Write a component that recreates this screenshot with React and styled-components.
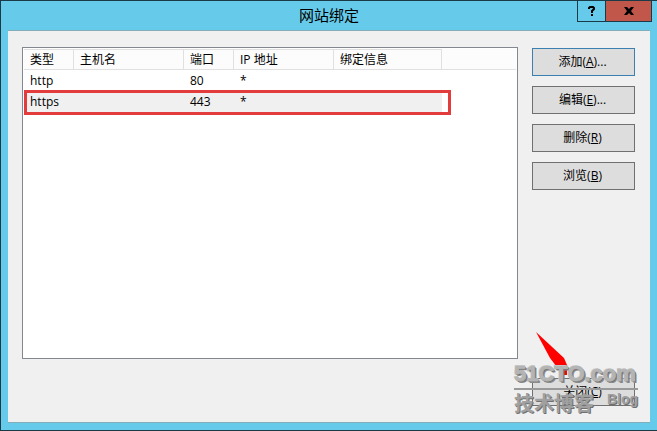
import React, { useState } from 'react';
import styled, { createGlobalStyle } from 'styled-components';

const GlobalStyle = createGlobalStyle`
  * {
    box-sizing: border-box;
  }

  body {
    margin: 0;
    font-family: 'Open Sans', 'Noto Sans CJK SC', sans-serif;
    font-size: 12px;
    color: #000;
  }
`;

const Dialog = styled.div`
  display: flex;
  flex-direction: column;
  min-height: 100vh;
  padding: 0 7px 7px;
  border: 1px solid #1b3a48;
  border-right: none;
  background-color: #66cbea;
`;

const TitleBar = styled.header`
  display: grid;
  grid-template-columns: 1fr auto 1fr;
  align-items: start;
  height: 29px;
`;

const Title = styled.h1`
  grid-column: 2;
  margin: 0;
  font-size: 15px;
  font-weight: normal;
  line-height: 28px;
`;

const WindowButtons = styled.div`
  display: flex;
  justify-content: flex-end;
  margin-right: -2px;
`;

const WindowButton = styled.button`
  display: flex;
  align-items: center;
  justify-content: center;
  width: ${props => (props.$close ? '47px' : '29px')};
  height: 21px;
  padding: 0;
  border: 1px solid #1b3a48;
  border-top: none;
  margin-left: ${props => (props.$close ? '-1px' : '0')};
  background-color: ${props => (props.$close ? '#c1564b' : '#66cbea')};
`;

const Client = styled.main`
  display: flex;
  flex: 1;
  gap: 14px;
  padding: 16px 15px 16px 14px;
  border-top: 1px solid #84adba;
  border-bottom: 1px solid #84adba;
  background-color: #f0f0f0;
`;

const ListBox = styled.div`
  flex: 1;
  margin-bottom: 47px;
  padding: 1px;
  border: 1px solid #828790;
  background-color: #fff;
`;

const Table = styled.table`
  width: 100%;
  border-collapse: separate;
  border-spacing: 0;
  table-layout: fixed;
`;

const HeadCell = styled.th`
  width: ${props => props.$width};
  height: 21px;
  padding: 0 0 0 6px;
  border: 1px solid #e0e0e0;
  border-left: none;
  border-right-width: ${props => (props.$filler ? '0' : '1px')};
  border-top-color: ${props => (props.$filler ? '#fcfcfc' : '#e0e0e0')};
  background-color: #fcfcfc;
  font-weight: normal;
  line-height: 18px;
  text-align: left;
`;

const Row = styled.tr`
  cursor: default;
`;

const Cell = styled.td`
  height: 21px;
  padding: 1px 0 0 6px;
  background-color: ${props => (props.$selected ? '#f0f0f0' : '#fff')};
  line-height: 20px;
  vertical-align: top;
`;

const Highlighted = styled.div`
  position: relative;
`;

const Marker = styled.div`
  position: absolute;
  top: 41px;
  left: 0;
  width: 427px;
  height: 25px;
  border: 3px solid #e23c3c;
  pointer-events: none;
`;

const Actions = styled.div`
  display: flex;
  flex-direction: column;
  gap: 10px;
  width: 103px;
  padding-top: 1px;
`;

const ActionButton = styled.button`
  height: 28px;
  padding: 0 2px 0 0;
  border: 1px solid ${props => (props.$primary ? '#3c7fb1' : '#707070')};
  background-color: #ddd;
  color: #000;
  font-family: inherit;
  font-size: 12px;
  line-height: 18px;
`;

const Footer = styled.div`
  position: relative;
  display: flex;
  flex-direction: column;
  margin-top: auto;
`;

const Arrow = styled.svg`
  position: absolute;
  top: -46px;
  left: 4px;
`;

const Watermark = styled.div`
  position: absolute;
  top: -18px;
  left: -18px;
  width: 124px;
  color: #b4b4b4;
  font-family: 'Liberation Sans', 'Noto Sans CJK SC', sans-serif;
  font-weight: bold;
  text-shadow: 1px 1px 0 #707070, 2px 2px 0 #8a8a8a, -1px -1px 0 #ddd;
  white-space: nowrap;
  pointer-events: none;
`;

const Site = styled.div`
  border-bottom: 2px solid #999;
  font-size: 22px;
  line-height: 28px;
  -webkit-text-stroke: 1px #b4b4b4;
`;

const Caption = styled.div`
  display: flex;
  justify-content: space-between;
  color: #a0a0a0;
  font-size: 20px;
  line-height: 28px;
  text-shadow: 1px 1px 0 #707070;
`;

const Small = styled.span`
  font-size: 14px;
  line-height: 18px;
`;

const columns = [
  { label: '类型', width: '50px' },
  { label: '主机名', width: '110px' },
  { label: '端口', width: '50px' },
  { label: 'IP 地址', width: '100px' },
  { label: '绑定信息', width: '108px' },
];

const bindings = [
  { type: 'http', host: '', port: '80', ip: '*', info: '' },
  { type: 'https', host: '', port: '443', ip: '*', info: '' },
];

const actions = [
  { label: '添加', hotkey: 'A', dots: true },
  { label: '编辑', hotkey: 'E', dots: true },
  { label: '删除', hotkey: 'R' },
  { label: '浏览', hotkey: 'B' },
];

function App() {
  const [selected, setSelected] = useState('https');

  return (
    <>
      <GlobalStyle />
      <Dialog>
        <TitleBar>
          <Title>网站绑定</Title>
          <WindowButtons>
            <WindowButton aria-label="Help">
              <svg width="8" height="10" viewBox="0 0 8 10">
                <path
                  d="M1 3V2l1-1h3l1 1v1L4 5v2M4 8v2"
                  fill="none"
                  stroke="#000"
                  strokeWidth="2"
                />
              </svg>
            </WindowButton>
            <WindowButton $close aria-label="Close">
              <svg width="10" height="8" viewBox="0 0 10 8">
                <path
                  d="M0 0h3l2 2 2-2h3L7 4l3 4H7L5 6 3 8H0l3-4z"
                  fill="#000"
                />
              </svg>
            </WindowButton>
          </WindowButtons>
        </TitleBar>
        <Client>
          <ListBox>
            <Highlighted>
              <Table>
                <thead>
                  <tr>
                    {columns.map(column => (
                      <HeadCell key={column.label} $width={column.width}>
                        {column.label}
                      </HeadCell>
                    ))}
                    <HeadCell as="td" $filler />
                  </tr>
                </thead>
                <tbody>
                  {bindings.map(row => (
                    <Row key={row.type} onClick={() => setSelected(row.type)}>
                      {Object.keys(row).map(key => (
                        <Cell key={key} $selected={row.type === selected}>
                          {row[key]}
                        </Cell>
                      ))}
                      <Cell />
                    </Row>
                  ))}
                </tbody>
              </Table>
              <Marker />
            </Highlighted>
          </ListBox>
          <Actions>
            {actions.map((action, i) => (
              <ActionButton key={action.hotkey} $primary={i === 0}>
                {action.label}(<u>{action.hotkey}</u>){action.dots && '...'}
              </ActionButton>
            ))}
            <Footer>
              <ActionButton>
                关闭(<u>C</u>)
              </ActionButton>
              <Arrow width="32" height="46" viewBox="0 0 32 46">
                <path d="M0 0L28 26L31 33V43H27L14 26Z" fill="#f00" />
              </Arrow>
              <Watermark>
                <Site>51CTO.com</Site>
                <Caption>
                  技术博客<Small>Blog</Small>
                </Caption>
              </Watermark>
            </Footer>
          </Actions>
        </Client>
      </Dialog>
    </>
  );
}

export default App;
